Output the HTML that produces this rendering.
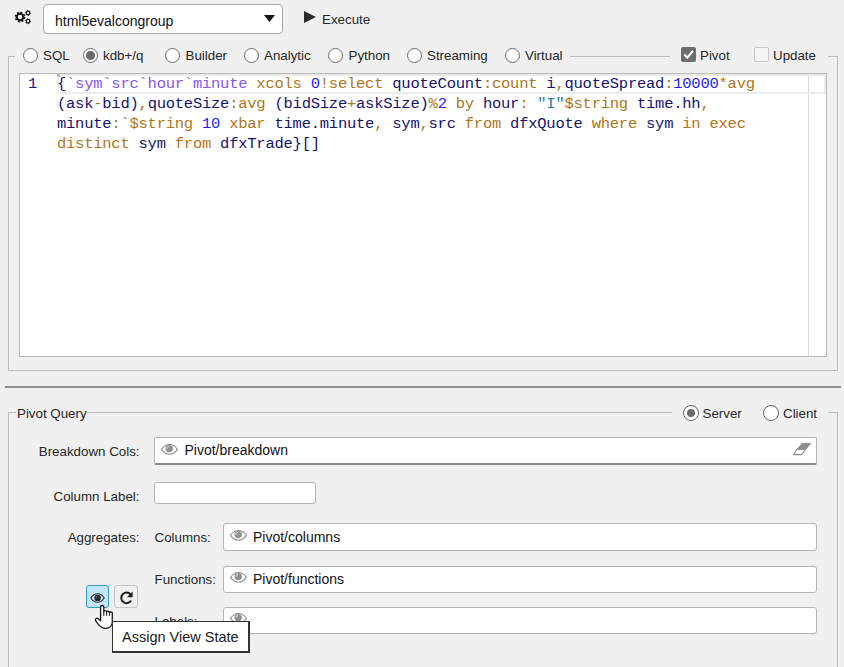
<!DOCTYPE html>
<html><head><meta charset="utf-8">
<style>
*{box-sizing:border-box}
html,body{margin:0;padding:0}
body{width:844px;height:667px;overflow:hidden;background:#f0f0f0;position:relative;font-family:"Liberation Sans",sans-serif;font-size:13px;color:#262626}
.a{position:absolute}
.t{position:absolute;white-space:pre}
.ln{position:absolute;background:#bcbcbc}
.radio{position:absolute;width:15px;height:15px;border:1.2px solid #6a6a6a;border-radius:50%;background:#fff}
.radio.on::after{content:"";position:absolute;left:50%;top:50%;width:8.6px;height:8.6px;margin:-4.3px 0 0 -4.3px;border-radius:50%;background:#6a6a6a}
.inp{position:absolute;background:#fff;border:1px solid #b4b4b4;border-radius:3px}
.code{position:absolute;left:57px;top:74px;font-family:"Liberation Mono",monospace;font-size:15.5px;line-height:20px;white-space:pre;color:#14146e;letter-spacing:-0.24px}
.g{color:#ae761a}.p{color:#8656f0}.b{color:#1e1ef5}.s{color:#2a7cae}
</style></head><body>
<svg class="a" style="left:0;top:0" width="40" height="30" viewBox="0 0 40 30">
<g fill="none" stroke="#1a1a1a">
<circle cx="20" cy="17" r="3.3" stroke-width="2.2"/>
<circle cx="20" cy="17" r="4.6" stroke-width="1.6" stroke-dasharray="1.8 1.81" />
<circle cx="28" cy="13" r="1.8" stroke-width="1.3"/>
<circle cx="28" cy="13" r="2.5" stroke-width="0.9" stroke-dasharray="1.1 1.52"/>
<circle cx="28" cy="21.2" r="1.8" stroke-width="1.3"/>
<circle cx="28" cy="21.2" r="2.5" stroke-width="0.9" stroke-dasharray="1.1 1.52"/>
</g></svg>
<div class="inp" style="left:43px;top:4px;width:240px;height:30px;border-color:#a8a8a8;border-radius:4px"></div>
<svg class="a" style="left:264px;top:15px" width="11" height="7" viewBox="0 0 11 7"><path d="M0 0H11L5.5 7Z" fill="#111"/></svg>
<svg class="a" style="left:304px;top:11px" width="12" height="12" viewBox="0 0 12 12"><path d="M0 0L12 6L0 12Z" fill="#2a2a2a"/></svg>
<div class="t" style="top:13px;font-size:14px;line-height:16px;left:55px;color:#111;">html5evalcongroup</div>
<div class="t" style="top:12px;font-size:13.33px;line-height:16px;left:322px;">Execute</div>
<div class="ln" style="left:8px;top:56px;width:1px;height:315px"></div>
<div class="ln" style="left:8px;top:370px;width:830px;height:1px"></div>
<div class="ln" style="left:837px;top:56px;width:1px;height:315px"></div>
<div class="ln" style="left:8px;top:56px;width:7px;height:1px"></div>
<div class="ln" style="left:570px;top:56px;width:100px;height:1px"></div>
<div class="ln" style="left:828px;top:56px;width:10px;height:1px"></div>
<div class="radio" style="left:23px;top:48px"></div>
<div class="t" style="top:48px;font-size:13.33px;line-height:16px;left:43px;">SQL</div>
<div class="radio on" style="left:83px;top:48px"></div>
<div class="t" style="top:48px;font-size:13.33px;line-height:16px;left:103px;">kdb+/q</div>
<div class="radio" style="left:165px;top:48px"></div>
<div class="t" style="top:48px;font-size:13.33px;line-height:16px;left:185.5px;">Builder</div>
<div class="radio" style="left:244px;top:48px"></div>
<div class="t" style="top:48px;font-size:13.33px;line-height:16px;left:264px;">Analytic</div>
<div class="radio" style="left:328px;top:48px"></div>
<div class="t" style="top:48px;font-size:13.33px;line-height:16px;left:348.5px;">Python</div>
<div class="radio" style="left:407px;top:48px"></div>
<div class="t" style="top:48px;font-size:13.33px;line-height:16px;left:427px;">Streaming</div>
<div class="radio" style="left:505px;top:48px"></div>
<div class="t" style="top:48px;font-size:13.33px;line-height:16px;left:525px;">Virtual</div>
<div class="a" style="left:681px;top:47px;width:15px;height:15px;background:#6d6d6d;border-radius:2px"></div>
<svg class="a" style="left:681px;top:47px" width="15" height="15" viewBox="0 0 15 15"><path d="M3.3 7.5L6.3 10.6L12 3.9" fill="none" stroke="#fff" stroke-width="2.1"/></svg>
<div class="a" style="left:754px;top:47px;width:15px;height:15px;background:#f5f5f5;border:1px solid #c6c6c6;border-radius:2px"></div>
<div class="t" style="top:48px;font-size:13.33px;line-height:16px;left:700px;">Pivot</div>
<div class="t" style="top:48px;font-size:13.33px;line-height:16px;left:773px;">Update</div>
<div class="a" style="left:19px;top:73px;width:808px;height:284px;background:#fff;border:1px solid #b9b9b9"></div>
<div class="a" style="left:808px;top:74px;width:1px;height:282px;background:#dcdcdc"></div>
<div class="a" style="left:57px;top:74px;width:769px;height:20px;border:2px solid #ebebeb"></div>
<div class="a" style="left:57px;top:74px;width:3px;height:3px;background:#b0b0b0;border-radius:1px"></div>
<div class="code" style="left:28px;color:#0c1a80">1</div>
<div class="code">{<span class="p">`sym`src`hour`minute</span><span class="g"> xcols </span><span class="b">0</span><span class="g">!select</span> quoteCount<span class="g">:count</span> i<span class="g">,</span>quoteSpread<span class="g">:</span><span class="b">10000</span><span class="g">*avg</span>
(ask<span class="g">-</span>bid)<span class="g">,</span>quoteSize<span class="g">:avg</span> (bidSize<span class="g">+</span>askSize)<span class="g">%</span><span class="b">2</span><span class="g"> by</span> hour<span class="g">:</span> <span class="s">"I"</span><span class="g">$string</span> time.hh<span class="g">,</span>
minute<span class="g">:</span><span class="p">`</span><span class="g">$string</span><span class="b"> 10</span><span class="g"> xbar</span> time.minute<span class="g">,</span> sym<span class="g">,</span>src<span class="g"> from</span> dfxQuote<span class="g"> where</span> sym<span class="g"> in exec</span>
<span class="g">distinct</span> sym<span class="g"> from</span> dfxTrade}[]</div>
<div class="a" style="left:5px;top:386px;width:836px;height:2px;background:#8e8e8e"></div>
<div class="ln" style="left:8px;top:412px;width:1px;height:260px"></div>
<div class="ln" style="left:837px;top:412px;width:1px;height:260px"></div>
<div class="ln" style="left:8px;top:412px;width:8px;height:1px"></div>
<div class="ln" style="left:87px;top:412px;width:585px;height:1px"></div>
<div class="ln" style="left:828px;top:412px;width:10px;height:1px"></div>
<div class="radio on" style="left:683px;top:405px;width:16px;height:16px;border-width:1.3px"></div>
<div class="radio" style="left:763px;top:405px;width:16px;height:16px;border-width:1.3px"></div>
<div class="t" style="top:406px;font-size:13.33px;line-height:16px;left:17px;">Pivot Query</div>
<div class="t" style="top:406px;font-size:13.33px;line-height:16px;left:702.5px;">Server</div>
<div class="t" style="top:406px;font-size:13.33px;line-height:16px;left:783px;">Client</div>
<div class="t" style="top:444px;font-size:13.33px;line-height:16px;right:704.5px;">Breakdown Cols:</div>
<div class="inp" style="left:154px;top:437px;width:663px;height:28px;border-bottom:2px solid #8a8a8a;border-radius:2px"></div>
<svg class="a" style="left:160px;top:443px" width="18" height="12" viewBox="0 0 18 12"><path d="M1.5 6.4C4 2.8 6.5 1.5 9.5 1.5S15 2.8 17.5 6.4C15 10 12.5 11.3 9.5 11.3S4 10 1.5 6.4Z" fill="none" stroke="#8e8e8e" stroke-width="1.1"/><circle cx="9.2" cy="5.6" r="3.7" fill="#8e8e8e"/><path d="M7 5.4L8.6 3.4" stroke="#cfcfcf" stroke-width="1.1" stroke-linecap="round"/></svg>
<div class="t" style="top:442px;font-size:14px;line-height:16px;left:184.5px;color:#111;">Pivot/breakdown</div>
<svg class="a" style="left:790px;top:440px" width="24" height="18" viewBox="0 0 24 18"><path d="M12 3.4H20.7L15.6 9.5H7Z" fill="#8e8e8e" stroke="#8e8e8e" stroke-width="1" stroke-linejoin="round"/><path d="M7 9.5H15.6L11.6 14.6H3.3Z" fill="#fff" stroke="#8e8e8e" stroke-width="1.1" stroke-linejoin="round"/></svg>
<div class="t" style="top:489px;font-size:13.33px;line-height:16px;right:704.5px;">Column Label:</div>
<div class="inp" style="left:154px;top:482px;width:162px;height:22px"></div>
<div class="t" style="top:530px;font-size:13.33px;line-height:16px;right:704.5px;">Aggregates:</div>
<div class="t" style="top:530px;font-size:13.33px;line-height:16px;left:154.5px;">Columns:</div>
<div class="inp" style="left:223px;top:523px;width:594px;height:28px"></div>
<svg class="a" style="left:229px;top:529px" width="18" height="12" viewBox="0 0 18 12"><path d="M1.5 6.4C4 2.8 6.5 1.5 9.5 1.5S15 2.8 17.5 6.4C15 10 12.5 11.3 9.5 11.3S4 10 1.5 6.4Z" fill="none" stroke="#8e8e8e" stroke-width="1.1"/><circle cx="9.2" cy="5.6" r="3.7" fill="#8e8e8e"/><path d="M7 5.4L8.6 3.4" stroke="#cfcfcf" stroke-width="1.1" stroke-linecap="round"/></svg>
<div class="t" style="top:529px;font-size:14px;line-height:16px;left:253px;color:#111;">Pivot/columns</div>
<div class="t" style="top:572px;font-size:13.33px;line-height:16px;left:154.5px;">Functions:</div>
<div class="inp" style="left:223px;top:566px;width:594px;height:27px"></div>
<svg class="a" style="left:229px;top:571px" width="18" height="12" viewBox="0 0 18 12"><path d="M1.5 6.4C4 2.8 6.5 1.5 9.5 1.5S15 2.8 17.5 6.4C15 10 12.5 11.3 9.5 11.3S4 10 1.5 6.4Z" fill="none" stroke="#8e8e8e" stroke-width="1.1"/><circle cx="9.2" cy="5.6" r="3.7" fill="#8e8e8e"/><path d="M7 5.4L8.6 3.4" stroke="#cfcfcf" stroke-width="1.1" stroke-linecap="round"/></svg>
<div class="t" style="top:571px;font-size:14px;line-height:16px;left:253px;color:#111;">Pivot/functions</div>
<div class="t" style="top:614px;font-size:13.33px;line-height:16px;left:154.5px;">Labels:</div>
<div class="inp" style="left:223px;top:607px;width:594px;height:27px"></div>
<svg class="a" style="left:229px;top:612px" width="18" height="12" viewBox="0 0 18 12"><path d="M1.5 6.4C4 2.8 6.5 1.5 9.5 1.5S15 2.8 17.5 6.4C15 10 12.5 11.3 9.5 11.3S4 10 1.5 6.4Z" fill="none" stroke="#8e8e8e" stroke-width="1.1"/><circle cx="9.2" cy="5.6" r="3.7" fill="#8e8e8e"/><path d="M7 5.4L8.6 3.4" stroke="#cfcfcf" stroke-width="1.1" stroke-linecap="round"/></svg>
<div class="a" style="left:86px;top:585px;width:23px;height:23px;background:#c4e6fa;border:1px solid #3098cc;border-radius:3px"></div>
<div class="a" style="left:114px;top:585px;width:24px;height:23px;background:#f0f0f0;border:1px solid #c4c4c4;border-radius:3px"></div>
<svg class="a" style="left:86px;top:585px" width="23" height="23" viewBox="0 0 23 23"><path d="M4.8 13C6.8 10 9 8.8 11.5 8.8S16.2 10 18.2 13C16.2 16 14 17.2 11.5 17.2S6.8 16 4.8 13Z" fill="none" stroke="#2a2a2a" stroke-width="1.1"/><circle cx="11.6" cy="12.9" r="3.2" fill="#2a2a2a"/><circle cx="10.6" cy="11.9" r="0.8" fill="#777"/></svg>
<svg class="a" style="left:114px;top:585px" width="24" height="23" viewBox="0 0 24 23"><path d="M16.6 9.4A5.3 5.3 0 1 0 17.1 15.6" fill="none" stroke="#1e1e1e" stroke-width="2"/><path d="M18.6 6.6V12.2H13Z" fill="#1e1e1e"/></svg>
<svg class="a" style="left:90px;top:600px" width="30" height="32" viewBox="0 0 30 32"><path d="M10.6 19.2V6.9C10.6 5 13.8 5 13.8 6.9V11.6C13.8 10.2 16.6 10.2 16.6 11.6V12C16.6 10.9 19.5 10.9 19.5 12.2V12.8C19.5 11.7 22.3 11.7 22.3 13V21.8C22.3 25.8 19.5 28.4 15.6 28.4C12.6 28.4 10.6 27 8.6 24.6L5.9 21.2C4.6 19.6 6.2 17.4 8 18.6L10.6 20.8Z" fill="#fff" stroke="#161620" stroke-width="1.3" stroke-linejoin="round"/><path d="M16.6 12V15.8M19.5 12.6V15.8M13.8 11.6V15.8" stroke="#161620" stroke-width="1.1"/></svg>
<div class="a" style="left:112px;top:621px;width:138px;height:32px;background:#fff;border:1px solid #333;border-bottom-width:2px;border-right-width:2px"></div>
<div class="t" style="top:629px;font-size:14.5px;line-height:16px;left:122px;color:#1a1a1a;">Assign View State</div>
</body></html>
